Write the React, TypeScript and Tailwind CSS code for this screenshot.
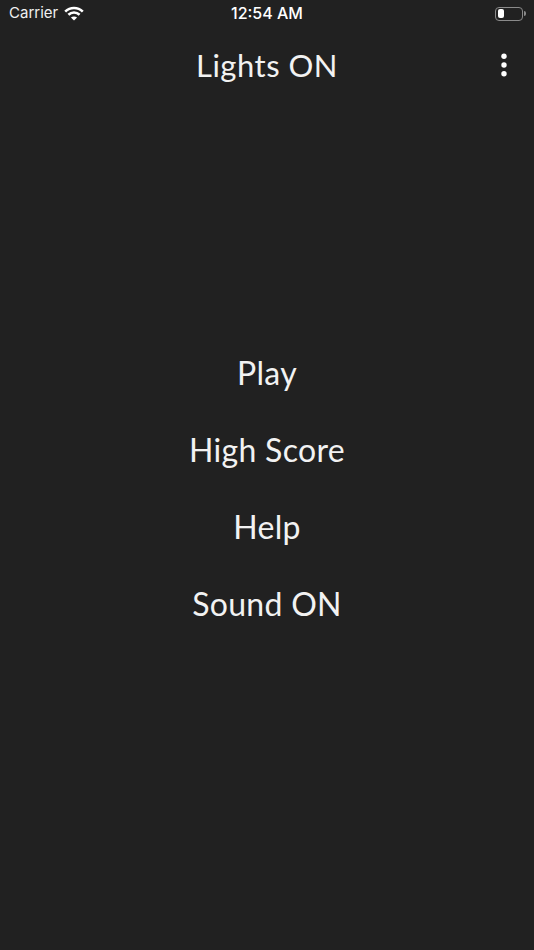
const menuItems = ["Play", "High Score", "Help", "Sound ON"]

function WifiIcon() {
  return (
    <svg width="20" height="15" viewBox="0 0 20 15" fill="none" stroke="#fff" strokeWidth="2.6">
      <path d="M1.2 5.6C6.2 0.8 13.8 0.8 18.8 5.6" />
      <path d="M4.4 8.8C7.6 5.8 12.4 5.8 15.6 8.8" />
      <path d="M10 14.6L6.9 11.5C8.6 10.2 11.4 10.2 13.1 11.5Z" fill="#fff" stroke="none" />
    </svg>
  )
}

function BatteryIcon() {
  return (
    <div className="flex items-center gap-[1px]">
      <div className="w-[28px] h-[14px] rounded-[4px] border border-[#8a8a8a] p-[1.5px]">
        <div className="w-[6px] h-full rounded-[2px] bg-white" />
      </div>
      <div className="w-[1.5px] h-[5px] rounded-r-sm bg-[#8a8a8a]" />
    </div>
  )
}

function MoreIcon() {
  return (
    <svg width="8" height="26" viewBox="0 0 8 26" fill="#fff">
      <circle cx="4" cy="4.2" r="2.7" />
      <circle cx="4" cy="13" r="2.7" />
      <circle cx="4" cy="21.8" r="2.7" />
    </svg>
  )
}

export default function App() {
  return (
    <div className="w-[534px] h-[950px] bg-[#212121] text-[#f2f2f2] flex flex-col font-['Lato',sans-serif]">
      <div className="h-[27px] flex items-center justify-between pl-[9px] pr-[8.5px] relative text-white font-['Inter',sans-serif] text-[15px]">
        <div className="flex items-center gap-[6px]">
          <span className="text-[#f0f0f0]">Carrier</span>
          <WifiIcon />
        </div>
        <span className="absolute left-0 right-0 text-center font-medium text-[16px] pb-[1px]">12:54 AM</span>
        <BatteryIcon />
      </div>

      <div className="h-[78px] flex items-center justify-center relative">
        <h1 className="text-[31px] tracking-[0.5px] leading-none pb-[1px]">Lights ON</h1>
        <div className="absolute right-[26px] top-[25px] flex">
          <MoreIcon />
        </div>
      </div>

      <div className="flex flex-col items-center gap-[32px] pt-[245px]">
        {menuItems.map((item) => (
          <div key={item} className="h-[45px] flex items-center text-[32px] tracking-[0.3px]">
            {item}
          </div>
        ))}
      </div>
    </div>
  )
}
